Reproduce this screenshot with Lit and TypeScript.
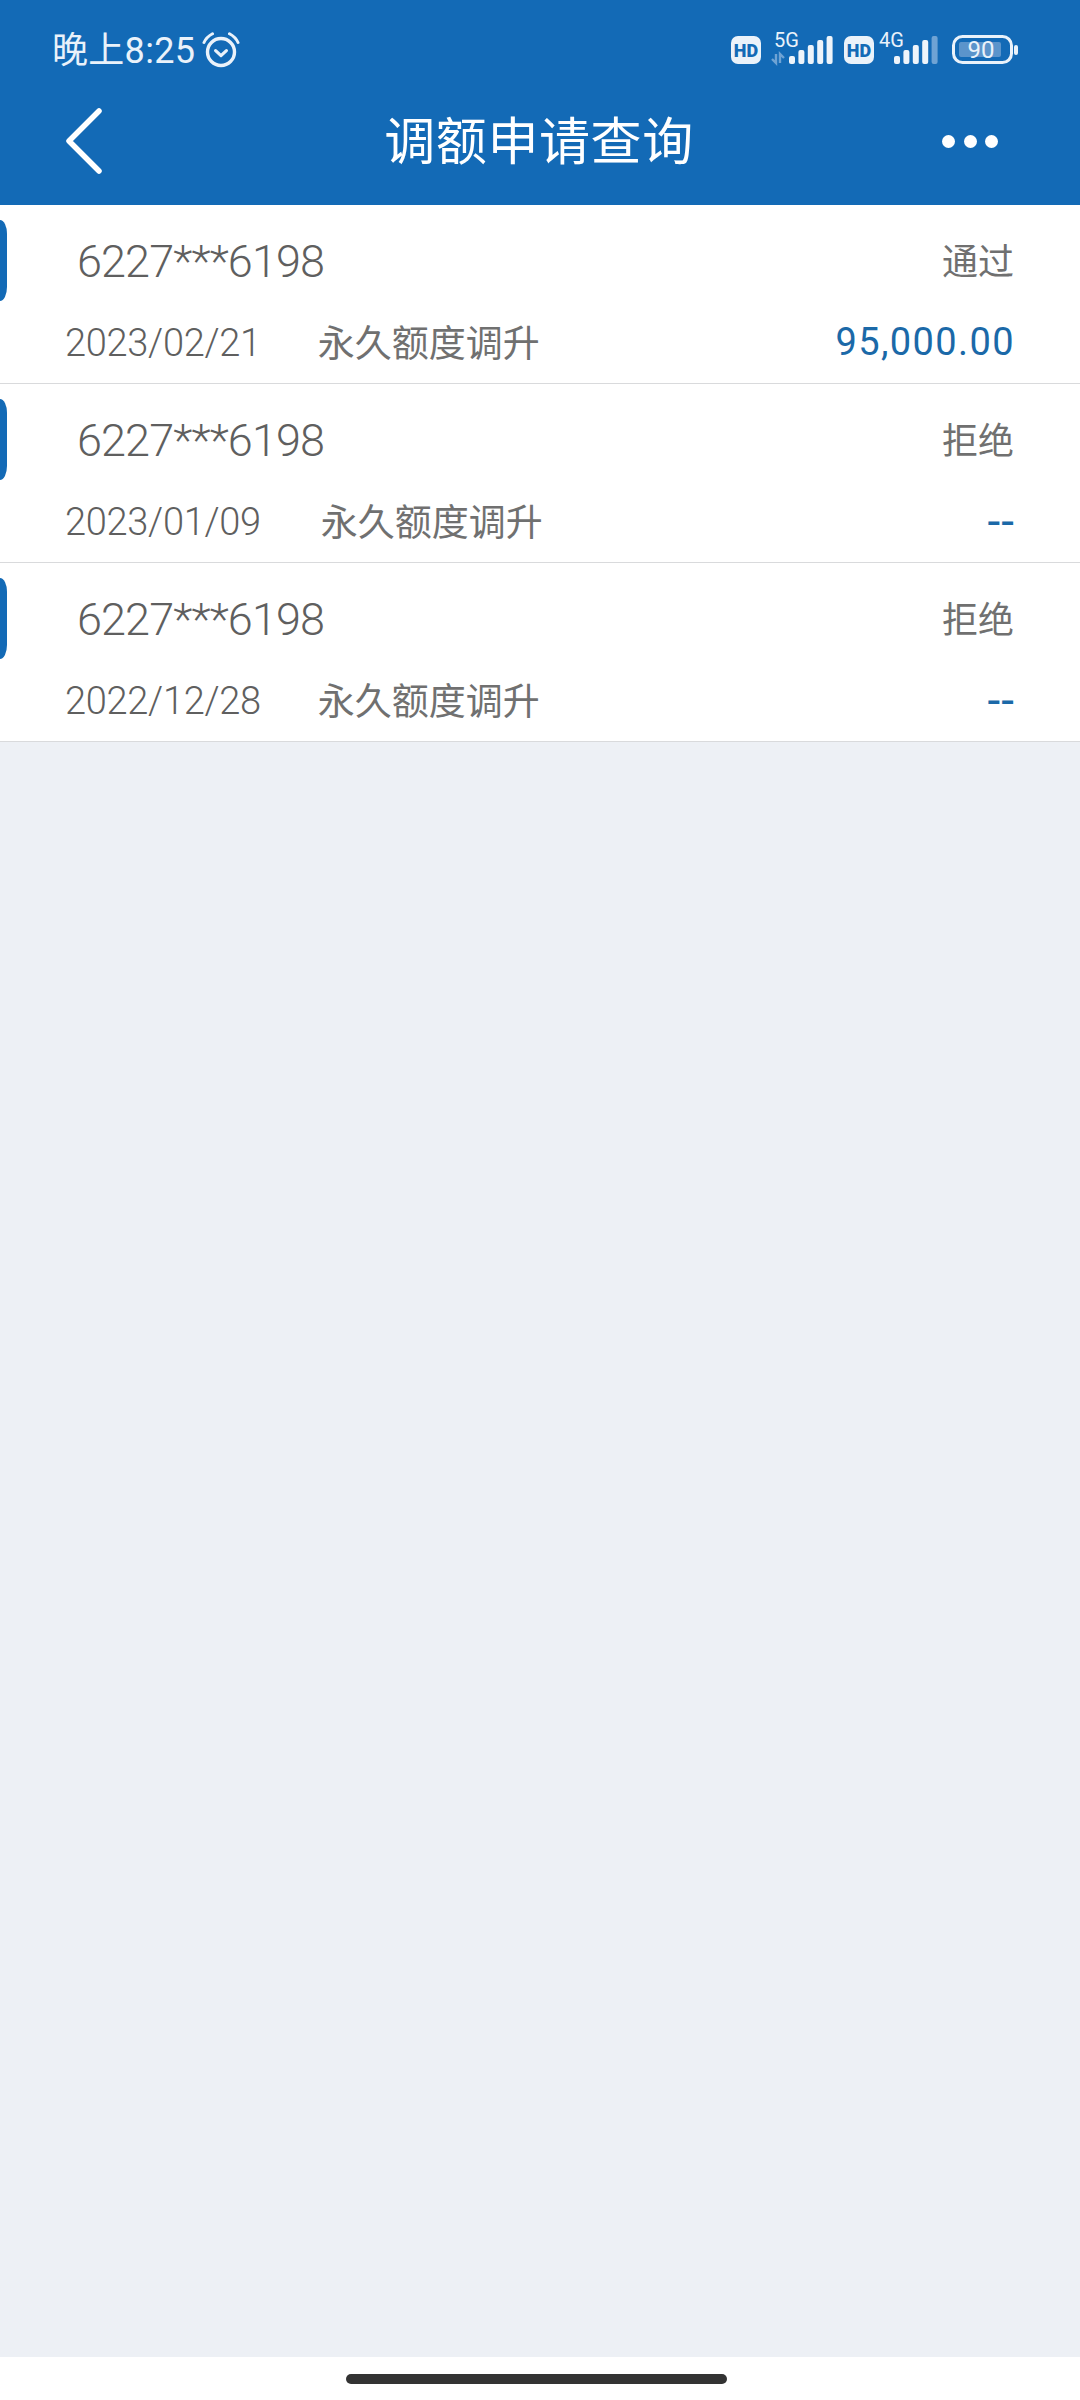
import { LitElement, html, css, svg } from "lit";
import { customElement } from "lit/decorators.js";

const ROWS = [
  { no: "6227***6198", status: "通过", date: "2023/02/21", type: "永久额度调升", amount: "95,000.00", gap: 58 },
  { no: "6227***6198", status: "拒绝", date: "2023/01/09", type: "永久额度调升", amount: "--", gap: 61 },
  { no: "6227***6198", status: "拒绝", date: "2022/12/28", type: "永久额度调升", amount: "--", gap: 58 },
];

const bars = (dim: boolean) => {
  const hs = [8, 14, 19, 24, 28];
  return hs.map((h, i) => svg`<rect x=${i * 9.4} y=${28 - h} width="6" height=${h} rx="2" fill=${dim && i === 4 ? "#6fa3d4" : "#eef4fa"}></rect>`);
};

@customElement("app-root")
export class AppRoot extends LitElement {
  static styles = css`
    :host { display: block; width: 1080px; height: 2400px; font-family: Roboto, "Noto Sans CJK SC", sans-serif; background: #fff; }
    .page { display: flex; flex-direction: column; height: 2400px; }
    .header { height: 205px; background: #136ab6; color: #fff; flex: none; display: flex; flex-direction: column; }
    .status { height: 77px; flex: none; display: flex; align-items: center; padding: 23px 0 0 52px; box-sizing: border-box; color: #eaf2fa; }
    .time { font-size: 36px; line-height: 50px; font-family: Roboto, "Noto Sans CJK SC", sans-serif; letter-spacing: 0.3px; position: relative; top: 1px; }
    .alarm { margin-left: 7px; display: block; }
    .sys { margin-left: auto; margin-right: 62px; display: block; }
    .nav { flex: 1; display: grid; grid-template-columns: 1fr auto 1fr; align-items: center; }
    .back { margin-left: 61px; display: block; }
    .title { font-family: "Noto Sans CJK SC", sans-serif; font-size: 51px; line-height: 60px; letter-spacing: 0.6px; color: #fff; position: relative; top: -3px; margin-left: -2px; }
    .more { justify-self: end; margin-right: 82px; display: flex; gap: 8.5px; }
    .more i { display: block; width: 13px; height: 13px; border-radius: 50%; background: #fff; }
    .list { background: #fff; flex: none; }
    .row { position: relative; height: 179px; box-sizing: border-box; border-bottom: 1.5px solid #d9dadc; padding: 0 66px 0 65px; display: flex; flex-direction: column; color: #666; }
    .tab { position: absolute; left: 0; top: 15px; width: 7px; height: 81px; background: #136ab6; border-radius: 0 7px 7px 0 / 0 14px 14px 0; }
    .line { display: flex; justify-content: space-between; align-items: center; }
    .line.top { height: 50px; margin-top: 30px; }
    .line.bottom { height: 50px; margin-top: 32px; }
    .no { font-size: 45px; font-weight: 300; letter-spacing: -0.9px; margin: 2px 0 0 12px; color: #5f5f5f; }
    .st { font-family: "Noto Sans CJK SC", sans-serif; font-size: 36px; font-weight: 400; color: #707070; margin-bottom: 3px; }
    .left { display: flex; align-items: center; }
    .date { font-size: 38px; font-weight: 300; letter-spacing: -0.3px; color: #5f5f5f; margin: 2px 0 0 0; }
    .type { font-family: "Noto Sans CJK SC", sans-serif; font-size: 37px; font-weight: 400; color: #707070; margin-bottom: 3px; margin-left: -1px; }
    .amount { font-size: 38px; font-weight: 400; letter-spacing: 1.4px; color: #1b69a8; margin-right: -1px; }
    .amount.dash { font-size: 46px; font-weight: 400; letter-spacing: 1px; margin-right: -1px; }
    .body { flex: 1; background: #edf0f5; }
    .foot { height: 43px; flex: none; background: #fff; display: flex; justify-content: center; padding: 17px 7px 0 0; box-sizing: border-box; }
    .home { width: 381px; height: 10px; border-radius: 5px; background: #333; }
  `;

  render() {
    return html`
      <div class="page">
        <div class="header">
          <div class="status">
            <span class="time">晚上8:25</span>
            <svg class="alarm" width="38" height="36" viewBox="0 0 38 36" fill="none" stroke="#eaf2fa">
              <circle cx="19" cy="20" r="13.5" stroke-width="3.4"></circle>
              <path d="M13.6 18.6l5.4 5 5.4-5" stroke-width="3.2" stroke-linecap="round" stroke-linejoin="round"></path>
              <path d="M2 10.5Q4.5 5 10.5 1.8M36 10.5Q33.5 5 27.5 1.8" stroke-width="3" stroke-linecap="round"></path>
            </svg>
            <svg class="sys" width="287" height="44" viewBox="0 -4 287 44">
              <rect x="0" y="4" width="30" height="28" rx="7" fill="#eaf2fa"></rect>
              <text x="15" y="24.5" text-anchor="middle" font-family="Roboto" font-weight="900" font-size="18" fill="#136ab6">HD</text>
              <text x="43" y="15" font-family="Roboto" font-size="20" fill="#eaf2fa">5G</text>
              <path d="M45 22v9l-4-4M49 31v-9l4 4" fill="none" stroke="#6fa3d4" stroke-width="2.4"></path>
              <g transform="translate(58 4)">${bars(false)}</g>
              <rect x="113" y="4" width="30" height="28" rx="7" fill="#eaf2fa"></rect>
              <text x="128" y="24.5" text-anchor="middle" font-family="Roboto" font-weight="900" font-size="18" fill="#136ab6">HD</text>
              <text x="148" y="15" font-family="Roboto" font-size="20" fill="#eaf2fa">4G</text>
              <g transform="translate(163 4)">${bars(true)}</g>
              <rect x="222.5" y="4.5" width="58" height="26" rx="9" fill="none" stroke="#eaf2fa" stroke-width="3"></rect>
              <rect x="228" y="10" width="42" height="15" rx="2" fill="#5b94cb"></rect>
              <text x="250" y="26" text-anchor="middle" font-family="Roboto" font-size="24" fill="#eaf2fa">90</text>
              <rect x="283" y="13" width="4" height="10" rx="2" fill="#eaf2fa"></rect>
            </svg>
          </div>
          <div class="nav">
            <svg class="back" width="44" height="72" viewBox="0 0 44 72" fill="none" stroke="#fff" stroke-width="5.5" stroke-linecap="round" stroke-linejoin="round">
              <path d="M38 6 8 36l30 30"></path>
            </svg>
            <div class="title">调额申请查询</div>
            <div class="more"><i></i><i></i><i></i></div>
          </div>
        </div>
        <div class="list">
          ${ROWS.map(
            (r) => html`
              <div class="row">
                <div class="tab"></div>
                <div class="line top"><span class="no">${r.no}</span><span class="st">${r.status}</span></div>
                <div class="line bottom">
                  <div class="left" style="gap:${r.gap}px"><span class="date">${r.date}</span><span class="type">${r.type}</span></div>
                  <span class="amount ${r.amount === "--" ? "dash" : ""}">${r.amount}</span>
                </div>
              </div>
            `
          )}
        </div>
        <div class="body"></div>
        <div class="foot"><div class="home"></div></div>
      </div>
    `;
  }
}
